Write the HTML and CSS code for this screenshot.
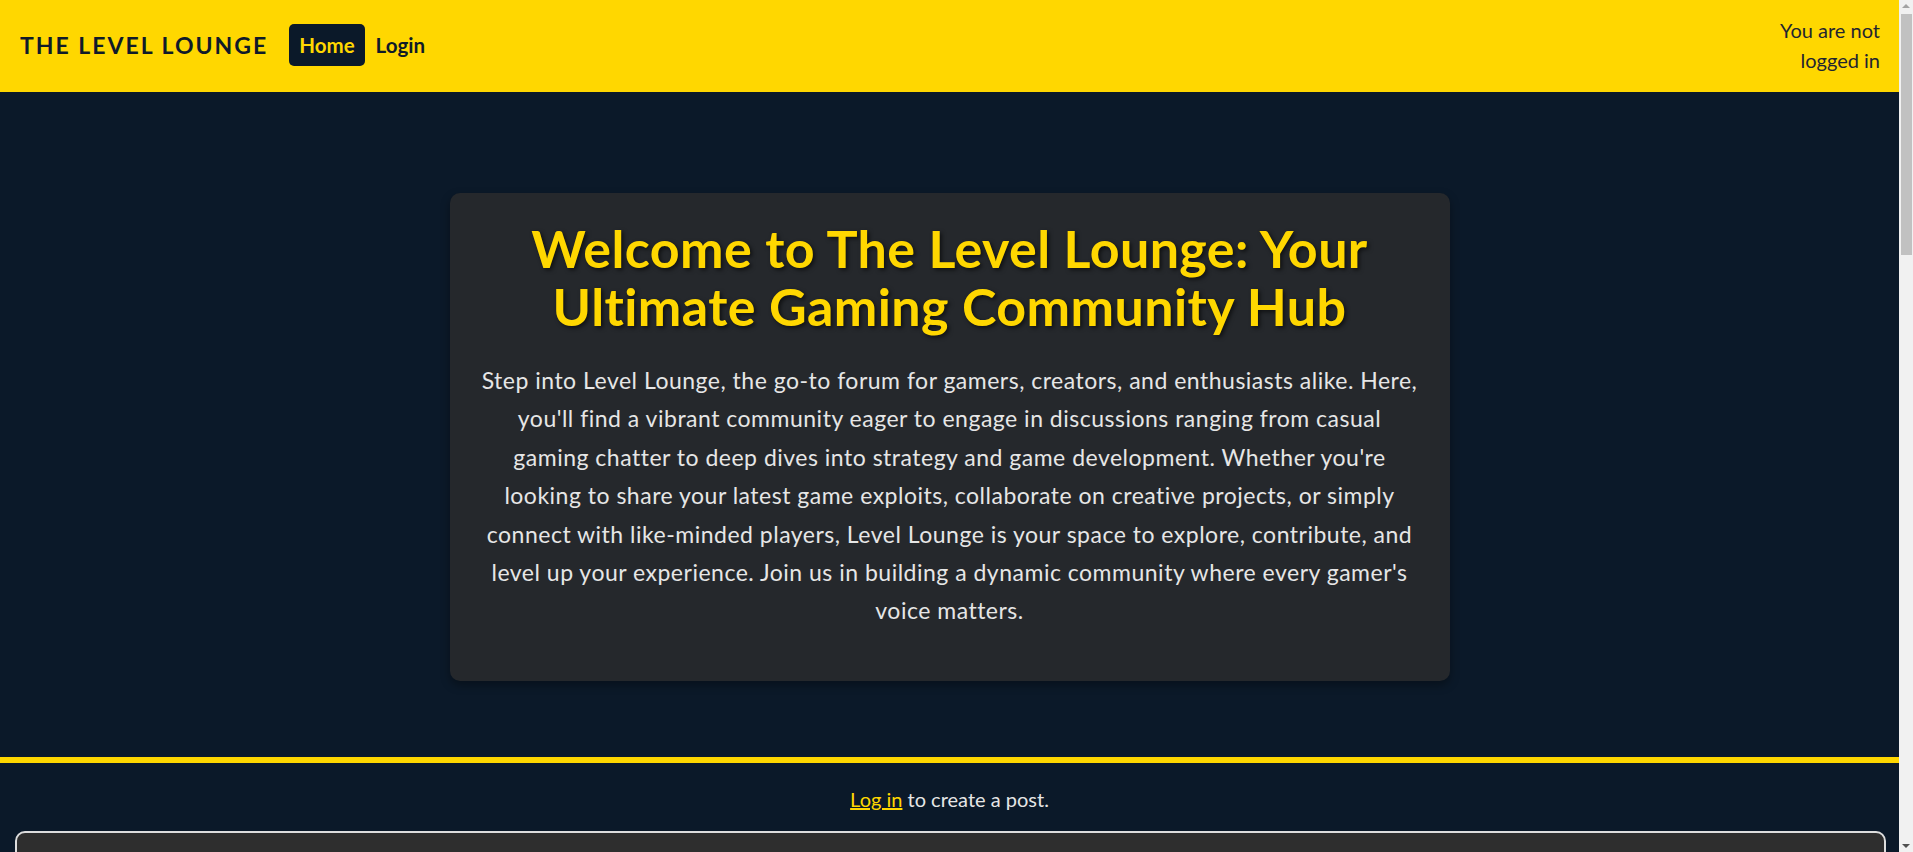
FILE: index.html
```html
<!DOCTYPE html>
<html lang="en">
<head>
<meta charset="utf-8">
<title>The Level Lounge</title>
<link rel="stylesheet" href="styles.css">
</head>
<body>
<header class="navbar">
  <div class="nav-left">
    <div class="brand">THE LEVEL LOUNGE</div>
    <nav class="nav-links">
      <a class="nav-link active" href="#">Home</a>
      <a class="nav-link" href="#">Login</a>
    </nav>
  </div>
  <div class="nav-status">You are not logged in</div>
</header>
<main>
  <section class="hero">
    <div class="hero-card">
      <h1 class="hero-title">Welcome to The Level Lounge: Your Ultimate Gaming Community Hub</h1>
      <p class="hero-text">Step into Level Lounge, the go-to forum for gamers, creators, and enthusiasts alike. Here, you'll find a vibrant community eager to engage in discussions ranging from casual gaming chatter to deep dives into strategy and game development. Whether you're looking to share your latest game exploits, collaborate on creative projects, or simply connect with like-minded players, Level Lounge is your space to explore, contribute, and level up your experience. Join us in building a dynamic community where every gamer's voice matters.</p>
    </div>
  </section>
  <section class="posts">
    <p class="login-prompt"><a href="#">Log in</a> to create a post.</p>
    <div class="post-box"></div>
  </section>
</main>
<div class="scrollbar" aria-hidden="true">
  <span class="scroll-arrow up"></span>
  <span class="scroll-thumb"></span>
  <span class="scroll-arrow down"></span>
</div>
</body>
</html>
```

FILE: styles.css
```css
* { box-sizing: border-box; }

html, body {
  margin: 0;
  padding: 0;
}

html::-webkit-scrollbar { display: none; }

body {
  background: #0b1929;
  font-family: Lato, "Open Sans", sans-serif;
  color: #e6e6e6;
  margin-right: 14px;
}

.navbar {
  background: #ffd700;
  height: 92px;
  display: flex;
  align-items: center;
  justify-content: space-between;
  padding: 0 19px 2px 20px;
}

.nav-left {
  display: flex;
  align-items: center;
  gap: 21px;
}

.brand {
  font-size: 23px;
  font-weight: 700;
  letter-spacing: 2px;
  color: #0f1a29;
}

.nav-links {
  display: flex;
  align-items: center;
  gap: 1px;
}

.nav-link {
  font-size: 20.5px;
  font-weight: 700;
  color: #0f1a29;
  text-decoration: none;
  padding: 9px 10px;
  border-radius: 5px;
  line-height: 24px;
}

.nav-link.active {
  background: #0b1929;
  color: #ffd700;
}

.nav-status {
  width: 120px;
  text-align: right;
  font-size: 20px;
  line-height: 30px;
  color: #1f2530;
}

.hero {
  padding: 101px 0 76px;
  display: flex;
  justify-content: center;
}

.hero-card {
  width: 1000px;
  background: #25282c;
  border-radius: 10px;
  padding: 26px 30px 35px;
  text-align: center;
  box-shadow: 0 4px 10px rgba(0, 0, 0, 0.35);
}

.hero-title {
  margin: 0 0 26px;
  font-size: 52px;
  line-height: 58px;
  letter-spacing: 0.4px;
  font-weight: 700;
  color: #ffd700;
  text-shadow: 2px 2px 4px rgba(0, 0, 0, 0.6);
}

.hero-text {
  margin: 0 0 16px;
  font-size: 23px;
  letter-spacing: 0.5px;
  line-height: 38.4px;
  color: #e6e6e6;
}

.posts {
  border-top: 6px solid #ffd700;
  padding-top: 24px;
}

.login-prompt {
  margin: 0 0 20px;
  text-align: center;
  font-size: 20px;
  line-height: 24px;
  color: #e6e6e6;
}

.login-prompt a {
  color: #ffd700;
}

.post-box {
  margin: 0 13px 20px 15px;
  height: 400px;
  background: #2e2e2e;
  border: 2px solid #dddddd;
  border-radius: 10px;
}

.scrollbar {
  position: fixed;
  top: 0;
  right: 0;
  width: 14px;
  height: 100vh;
  background: #f1f1f1;
}

.scroll-thumb {
  position: absolute;
  top: 14px;
  left: 2px;
  width: 11px;
  height: 241px;
  background: #c1c1c1;
}

.scroll-arrow {
  position: absolute;
  left: 3px;
  width: 0;
  height: 0;
  border-left: 4px solid transparent;
  border-right: 4px solid transparent;
}

.scroll-arrow.up {
  top: 4px;
  border-bottom: 4px solid #a3a3a3;
}

.scroll-arrow.down {
  bottom: 4px;
  border-top: 4px solid #505050;
}
```
